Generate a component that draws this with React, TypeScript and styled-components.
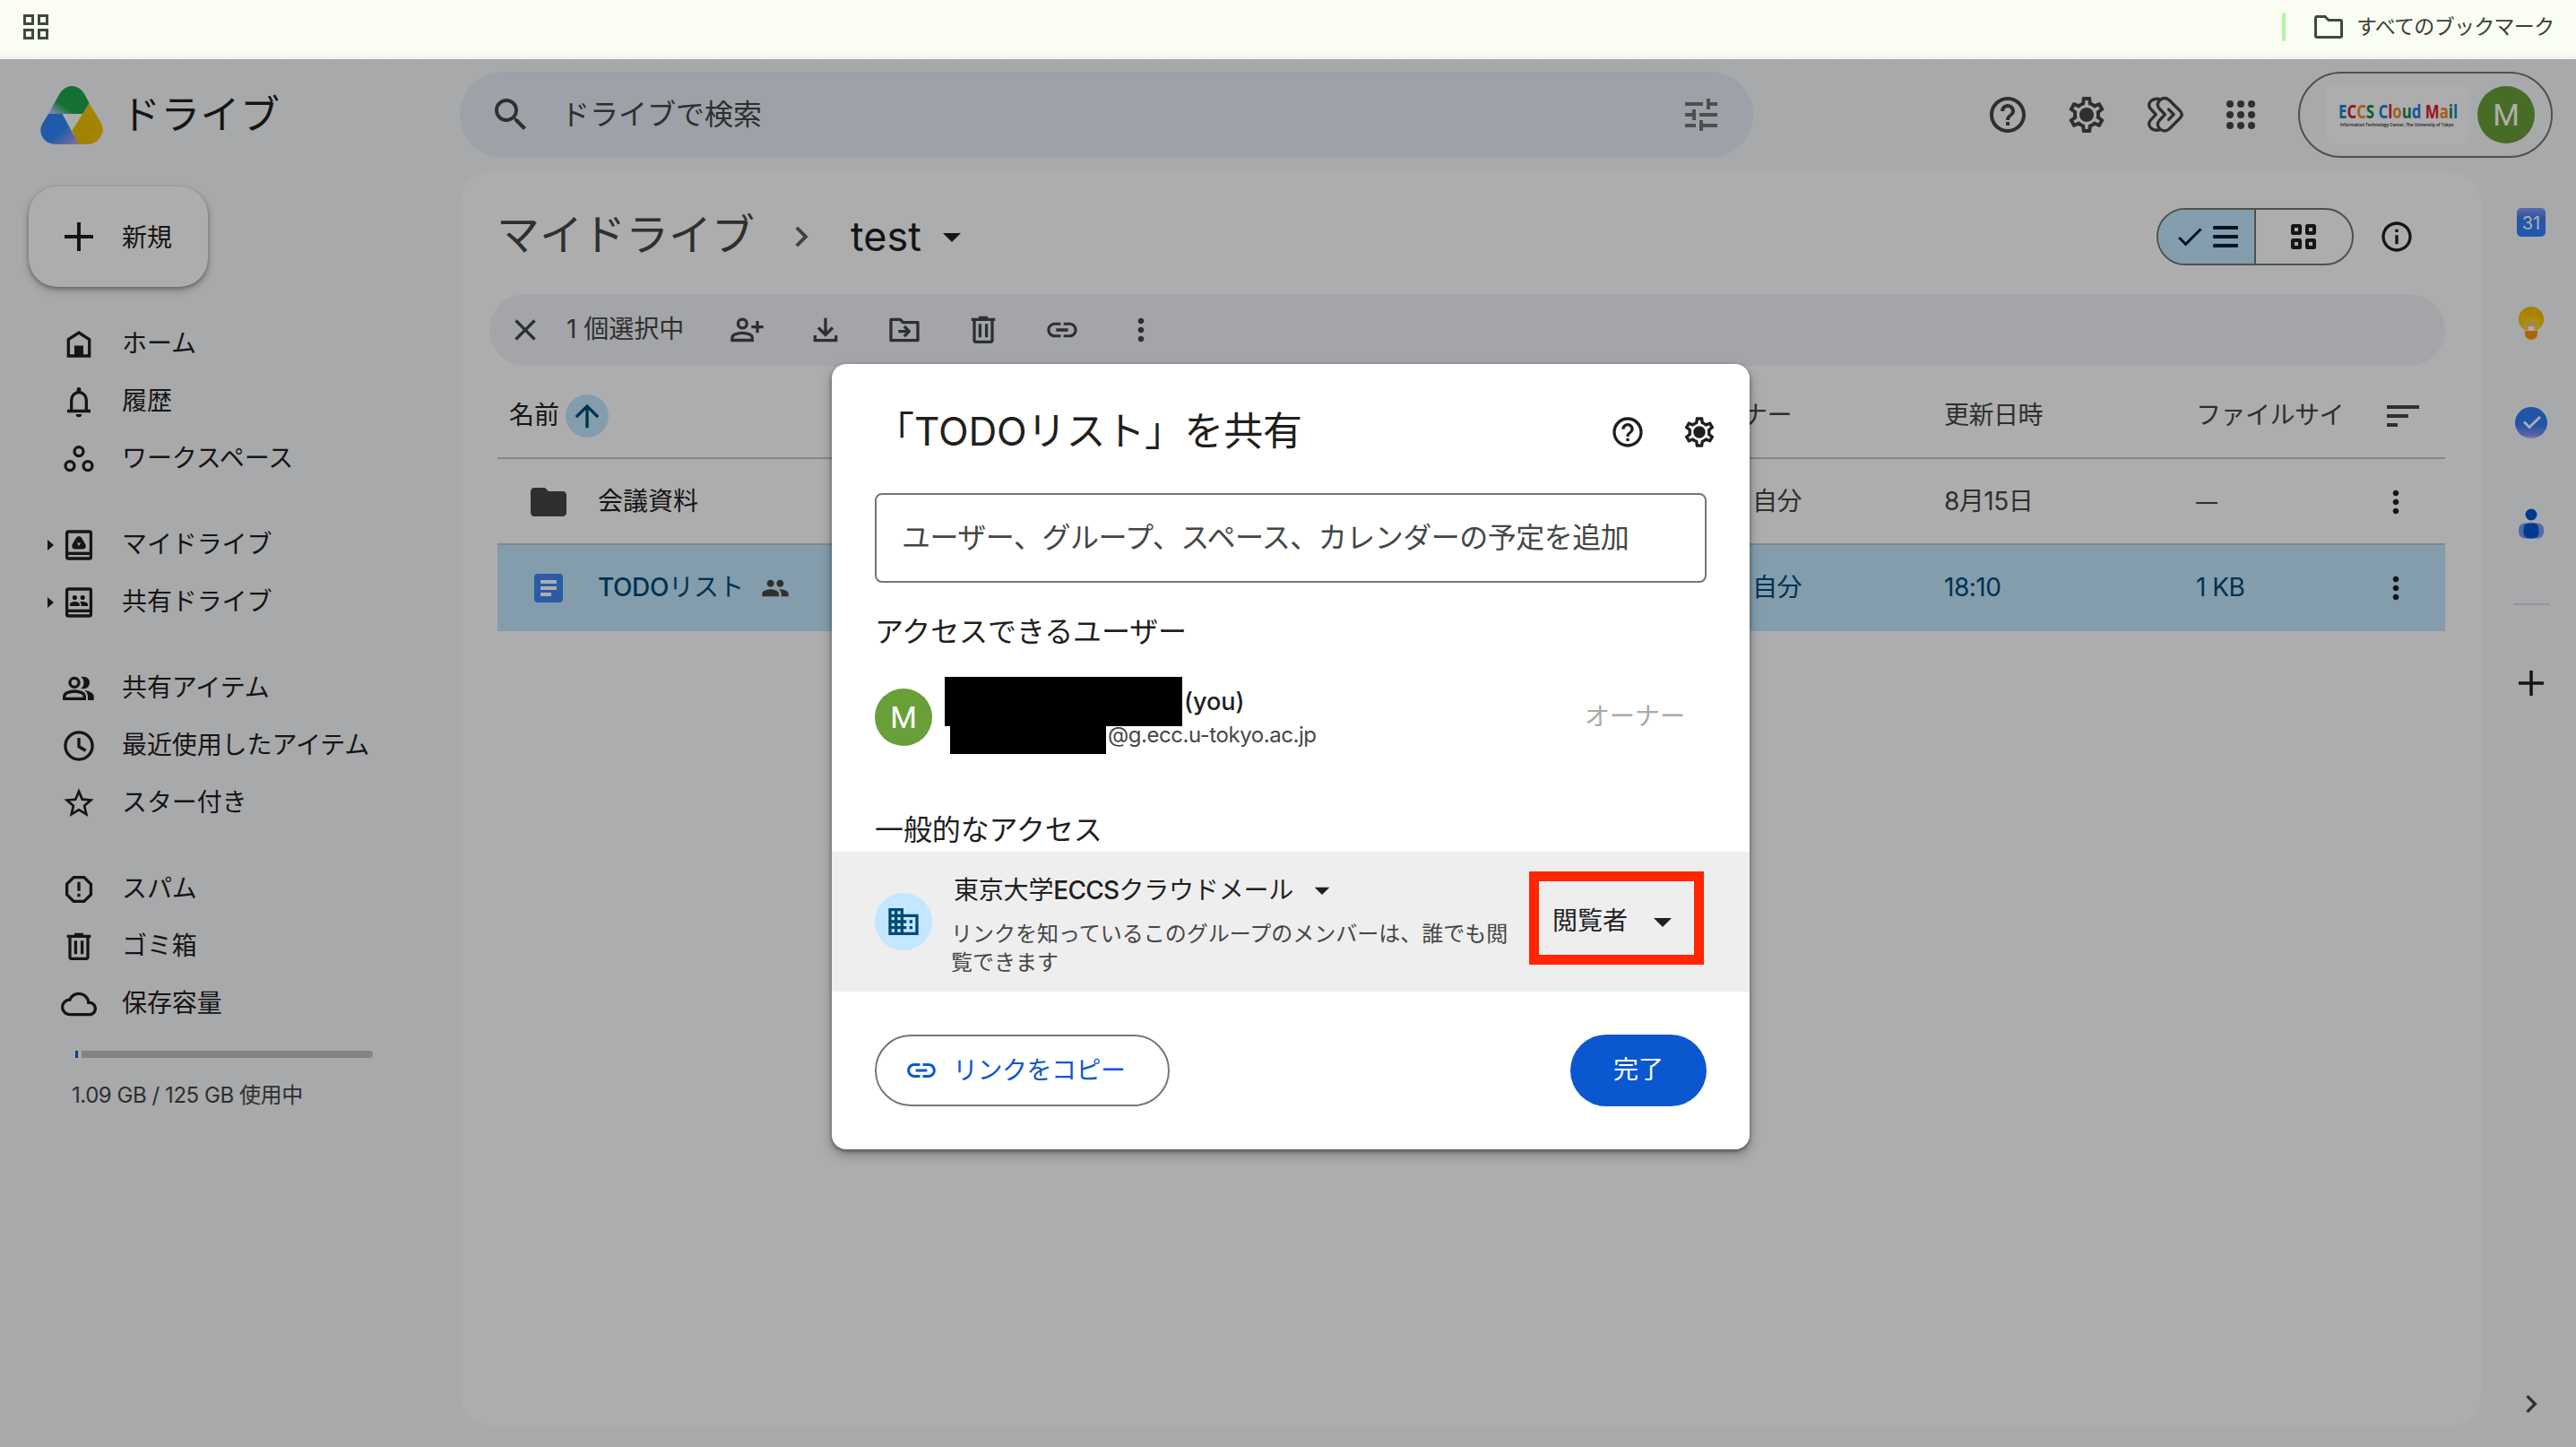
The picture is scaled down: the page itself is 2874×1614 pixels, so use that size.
import React from 'react';
import styled, { createGlobalStyle } from 'styled-components';
import {
  MdArrowDropDown, MdArrowUpward, MdBusiness, MdCheck, MdChevronRight, MdClose,
  MdCloudQueue, MdFolder, MdHelpOutline, MdInfoOutline, MdLink, MdMoreVert, MdOutlineSettings,
  MdPeople, MdSearch, MdSort, MdStarBorder, MdTune,
} from 'react-icons/md';

const Global = createGlobalStyle`
  * { box-sizing: border-box; }
  body { margin: 0; overflow: hidden; font-family: Inter, "Noto Sans CJK JP", sans-serif; }
  button { font: inherit; border: 0; background: none; padding: 0; margin: 0; }
  svg { display: block; flex: none; }
`;

/* ---------- icons ---------- */

type StrokeProps = { size?: number; box?: number; width?: number; children: React.ReactNode };
const Stroke = ({ size = 40, box = 40, width = 3.3, children }: StrokeProps) => (
  <svg width={size} height={size} viewBox={`0 0 ${box} ${box}`} fill="none" stroke="currentColor" strokeWidth={width}>
    {children}
  </svg>
);

const HomeIcon = () => (
  <Stroke>
    <path d="M8.3 33V14.6L20 7l11.7 7.6V33z" />
    <path d="M15 21.5h10V33H15z" fill="currentColor" stroke="none" />
  </Stroke>
);
const BellIcon = () => (
  <Stroke>
    <path d="M11.7 30.5V18a8.3 8.3 0 0 1 16.6 0v12.5M7 30.5h26" />
    <path d="M17.6 9V6.3a2.4 2.4 0 0 1 4.8 0V9zM16.7 34h6.6a3.3 3.3 0 0 1-6.6 0z" fill="currentColor" stroke="none" />
  </Stroke>
);
const WorkspacesIcon = () => (
  <Stroke>
    <circle cx="20" cy="11.6" r="5" /><circle cx="10" cy="27.6" r="5" /><circle cx="30" cy="27.6" r="5" />
  </Stroke>
);
const MyDriveIcon = () => (
  <Stroke>
    <rect x="6.6" y="5" width="26.8" height="30" rx="1.5" /><path d="M6 29.3h28" />
    <path fillRule="evenodd" fill="currentColor" stroke="none" d="M17.2 11.6q2.8-3.2 5.6 0l4.6 7.6q1.6 4.6-2.8 5.2h-9.2q-4.4-.6-2.8-5.2zM18 17.6l2 3.6 2-3.6z" />
  </Stroke>
);
const SharedDriveIcon = () => (
  <Stroke>
    <rect x="6.6" y="5" width="26.8" height="30" rx="1.5" /><path d="M6 29.3h28" />
    <g fill="currentColor" stroke="none">
      <circle cx="15.4" cy="14.6" r="2.6" /><circle cx="24.2" cy="14.6" r="2.6" />
      <path d="M10 24v-2.2q1-2.8 5.4-2.8t5.4 2.8V24zM22.4 24v-2.4l-1.2-2.4q7.4-1 8.8 2.6V24z" />
    </g>
  </Stroke>
);
const GroupIcon = () => (
  <Stroke>
    <circle cx="15" cy="13.4" r="5" />
    <path d="M3.7 31.3v-2.6q.3-2.6 3-3.9 8.3-3.6 16.6 0 2.7 1.3 3 3.9v2.6z" />
    <g fill="currentColor" stroke="none">
      <path d="M22 20.1q3.4-1.9 3.4-6.7T22 6.9q9.4-1.4 10 6.5-.6 8-10 6.700zM30 33V28.300q-.2-3.600-3.500-6.200 9.800 1.600 10.200 6.300V33z" />
    </g>
  </Stroke>
);
const PersonAddIcon = () => (
  <Stroke>
    <circle cx="15.3" cy="13" r="4.9" />
    <path d="M3.9 31.5v-2.9q.3-2.3 2.9-3.5 8.3-3.6 16.6 0 2.6 1.2 2.9 3.5v2.9z" />
    <path d="M32 10v13.3M25.3 16.7h13.3" />
  </Stroke>
);
const ClockIcon = () => <Stroke><circle cx="20" cy="20" r="15.1" /><path d="M20 11v9.8l7.6 4.4" /></Stroke>;
const SpamIcon = () => (
  <Stroke>
    <path d="M14.2 6.6h11.6l7.6 7.6v11.6l-7.6 7.6H14.2l-7.600-7.600V14.200zM20 11.700v10M20 24.800v3.400" />
  </Stroke>
);
const TrashIcon = () => (
  <Stroke>
    <path d="M10 8v23.5q0 1.8 1.800 1.800h16.400q1.800 0 1.800-1.800V8M6.700 8.300h26.600M15 6.300h10M16.400 13.300v15M23.600 13.300v15" />
  </Stroke>
);
const DownloadIcon = () => <Stroke><path d="M20 6.700V25M12 17.500l8 8 8-8M8.300 26v5.700h23.400V26" /></Stroke>;
const MoveIcon = () => (
  <Stroke>
    <path d="M5 31.700V8.300h10.300l3.300 3.400H35v20zM13.300 21.600h11M19.800 16l5.600 5.600-5.600 5.600" strokeLinejoin="round" />
  </Stroke>
);
const GearIcon = ({ size }: { size: number }) => (
  <svg width={size} height={size} viewBox="0 0 24 24" fill="currentColor">
    <MdOutlineSettings size={24} /><circle cx="12" cy="12" r="3.5" />
  </svg>
);
const ShortcutsIcon = () => (
  <Stroke size={48} box={48} width={3.3}>
    <g strokeLinejoin="round" strokeLinecap="round">
      <path d="M28 7.500L40.500 20q3.400 3.700 0 7.500L28 40q-5 4-10 0-4.800-4.600-1-9.500l6.500-6.800L17 17q-3.800-5 1-9.500 5-4 10 0z" />
      <path d="M17.500 6.800q-4.600-1.600-9 1.200-4.800 4-1.500 9l6.300 6.700L7 30.500q-3.300 5 1.500 9 4.400 2.800 9 1.200M27.500 18l5.700 5.700-5.700 5.700" />
    </g>
  </Stroke>
);
const AppsIcon = () => (
  <svg width="48" height="48" viewBox="0 0 48 48" fill="currentColor">
    {[12, 24, 36].flatMap((y) => [12, 24, 36].map((x) => <circle key={`${x}-${y}`} cx={x} cy={y} r="4" />))}
  </svg>
);
const FourSquares = ({ round }: { round?: boolean }) => (
  <svg width="28" height="28" viewBox="0 0 28 28" fill="none" stroke="currentColor" strokeWidth={round ? 4 : 3}>
    {[0, 16].flatMap((y) => [0, 16].map((x) => round
      ? <rect key={`${x}-${y}`} x={x + 2} y={y + 2} width="8" height="8" rx="0.5" />
      : <rect key={`${x}-${y}`} x={x + 1.5} y={y + 1.5} width="9" height="9" />))}
  </svg>
);
const ListIcon = () => (
  <svg width="28" height="24" viewBox="0 0 28 24" fill="currentColor">
    {[0, 10, 20].map((y) => <rect key={y} y={y} width="28" height="4" rx="1" />)}
  </svg>
);
const PlusIcon = ({ size, width }: { size: number; width: number }) => (
  <Stroke size={size} box={32} width={width}><path d="M16 0v32M0 16h32" /></Stroke>
);
const FolderOutline = () => (
  <svg width="32" height="26" viewBox="0 0 32 26" fill="none" stroke="currentColor" strokeWidth="3">
    <path d="M1.500 3q0-1.500 1.500-1.500h9l4 4h13q1.500 0 1.500 1.500v16q0 1.500-1.500 1.500H3q-1.500 0-1.500-1.500z" />
  </svg>
);
const DriveLogo = () => (
  <svg width="70" height="65" viewBox="0 0 70 65">
    <defs>
      <linearGradient id="dg" x1="0" y1="1" x2="0.7" y2="0.3">
        <stop offset="0.12" stopColor="#a9c8ff" /><stop offset="0.48" stopColor="#1ea64c" />
      </linearGradient>
      <linearGradient id="db" x1="0.4" y1="0.4" x2="1" y2="1">
        <stop offset="0.25" stopColor="#2f86fb" /><stop offset="0.9" stopColor="#b3a2f2" />
      </linearGradient>
      <linearGradient id="dy" x1="1" y1="0" x2="0" y2="1">
        <stop offset="0" stopColor="#f6c808" /><stop offset="1" stopColor="#eabc00" />
      </linearGradient>
    </defs>
    <path d="M25 31h23L35.3 50.5z" fill="#fff" />
    <path d="M9 31L21.500 8.500Q27 0 35.300 0T49 8.500L54.500 19 47.500 31z" fill="url(#dg)" />
    <path d="M54.500 19L67.500 40.500Q72.500 50 66.500 58 61.500 65 52.500 65H42.300L35.300 50z" fill="url(#dy)" />
    <path d="M9 31h15.500L42.800 65H17.500Q8 65 3 58-2 50 2 42.500z" fill="url(#db)" />
  </svg>
);
const DocIcon = () => (
  <svg width="32" height="32" viewBox="0 0 32 32">
    <rect width="32" height="32" rx="4" fill="#4285f4" />
    <path d="M7 9h18M7 16h18M7 23h12" stroke="#fff" strokeWidth="4" />
  </svg>
);
const CalendarIcon = () => (
  <svg width="32" height="32" viewBox="0 0 32 32">
    <defs><linearGradient id="cal" x1="0" y1="0" x2="0" y2="1"><stop offset="0" stopColor="#8f9bff" /><stop offset="0.35" stopColor="#3f7ff5" /><stop offset="1" stopColor="#3280ff" /></linearGradient></defs>
    <rect width="32" height="32" rx="5" fill="url(#cal)" />
    <text x="16" y="23.500" textAnchor="middle" fontSize="20" fill="#fff" fontFamily="Inter, sans-serif">31</text>
  </svg>
);
const KeepIcon = () => (
  <svg width="28" height="37" viewBox="0 0 28 37">
    <defs><radialGradient id="kp" cx="0.5" cy="0.85" r="0.6"><stop offset="0" stopColor="#ffb0c8" /><stop offset="0.5" stopColor="#fcd01a" /><stop offset="1" stopColor="#f8c000" /></radialGradient></defs>
    <path d="M14 0a14 14 0 0 1 7 26.200H7A14 14 0 0 1 14 0z" fill="url(#kp)" />
    <path d="M7 27h14v3a7 7 0 0 1-14 0z" fill="#ff9500" /><rect x="10.5" y="22" width="7" height="5" fill="#fff" />
  </svg>
);
const TasksIcon = () => (
  <svg width="36" height="36" viewBox="0 0 36 36">
    <defs><linearGradient id="tk" x1="0" y1="0" x2="0" y2="1"><stop offset="0.55" stopColor="#2f7cf6" /><stop offset="0.9" stopColor="#8b8df5" /><stop offset="1" stopColor="#b0d6ff" /></linearGradient></defs>
    <ellipse cx="18" cy="17.600" rx="18" ry="17.600" fill="url(#tk)" />
    <path d="M10 16.500l6 6L28 11" stroke="#fff" strokeWidth="3" fill="none" />
  </svg>
);
const ContactsIcon = () => (
  <svg width="28" height="34" viewBox="0 0 28 34">
    <circle cx="14" cy="7" r="6.5" fill="#0057d8" />
    <rect y="16.500" width="28" height="17" rx="7" fill="#7f9cf5" /><rect x="5.500" y="16.500" width="17" height="17" rx="6" fill="#0057d8" />
  </svg>
);

/* ---------- browser bar ---------- */

const Page = styled.div`
  width: 2874px; height: 1614px; display: grid; grid-template-rows: 66px 1548px; overflow: hidden;
`;
const BookmarkBar = styled.div`
  display: flex; align-items: center; height: 66px; padding: 0 0 6px 26px; color: #43483f;
  background: linear-gradient(#f9fdf2 0 58px, #f1f4eb 66px);
`;
const BarDivider = styled.i`width: 4px; height: 32px; margin: 0 32px 0 auto; border-radius: 2px; background: #b1f5a5;`;
const BookmarkLabel = styled.span`
  width: 245px; margin-left: 15px; font-size: 23px; letter-spacing: -0.7px; line-height: 32px; white-space: nowrap; color: #3a3f37;
`;

/* ---------- drive window ---------- */

const Stack = styled.div`display: grid; height: 1548px; > * { grid-area: 1 / 1; }`;
const Drive = styled.div`background: #f8fafd; color: #1f1f1f; height: 1548px; overflow: hidden;`;
const Header = styled.header`display: flex; align-items: center; height: 126px; padding-bottom: 2px; color: #444746;`;
const Brand = styled.div`display: flex; align-items: center; width: 513px; padding-left: 45px;`;
const BrandName = styled.span`
  margin-left: 20px; font-size: 44px; line-height: 60px; letter-spacing: 0.3px; color: #1f1f1f; white-space: nowrap;
`;
const SearchPill = styled.div`
  display: flex; align-items: center; width: 1443px; height: 96px; border-radius: 48px; padding: 0 34px 0 33px; background: #e9eef6;
`;
const SearchText = styled.span`flex: 1; margin-left: 32px; font-size: 32px; line-height: 44px;`;
const Dim = styled.span`color: #747775;`;
const HeaderIcons = styled.div`display: flex; align-items: center; gap: 40px; margin-left: 260px; > :last-child { margin-left: -4px; }`;
const Account = styled.div`
  display: flex; align-items: center; justify-content: flex-end; width: 284px; height: 96px; margin-left: 40px; padding-right: 18px;
  border: 2px solid #747775; border-radius: 48px;
`;
const OrgCard = styled.div`
  display: flex; flex-direction: column; justify-content: center; width: 158px; height: 66px; padding: 4px 0 0 13px; margin-right: 10px;
  border-radius: 6px; background: #fff; white-space: nowrap; color: #222;
`;
const OrgName = styled.b`
  font: 700 21px/22px "Open Sans", sans-serif; transform: scaleX(0.8); transform-origin: 0 50%;
`;
const Letter = styled.span<{ $c: string }>`color: ${(p) => p.$c};`;
const OrgSub = styled.span`
  padding-left: 4px; font: 600 10px/12px "Open Sans", sans-serif; transform: scale(0.47, 0.6); transform-origin: 0 0;
`;
const Avatar = styled.span`
  display: flex; align-items: center; justify-content: center; flex: none; width: 64px; height: 64px; border-radius: 50%;
  background: #689f38; color: #fff; font: 400 34px/64px Roboto, sans-serif;
`;

const Body = styled.div`display: flex; height: 1422px; > * { flex: none; }`;
const Sidebar = styled.nav`width: 514px; padding-top: 16px;`;
const NewButton = styled.button`
  display: flex; align-items: center; width: 200px; height: 112px; margin: 0 0 32px 32px; padding-left: 40px; border-radius: 32px;
  background: #fff; color: #1f1f1f; font-size: 28px; gap: 32px;
  box-shadow: 0 2px 4px rgba(0, 0, 0, 0.3), 0 4px 8px 2px rgba(0, 0, 0, 0.15);
  > span { margin-top: -3px; }
`;
const NavGroup = styled.div`margin-bottom: 32px;`;
const NavItem = styled.div`
  display: flex; align-items: center; height: 64px; padding-left: 53px; font-size: 28px; line-height: 40px; white-space: nowrap;
  > svg { width: 40px; }
`;
const Twisty = styled.i<{ $on?: boolean }>`
  width: 7px; margin-right: 8px; border: 6px solid transparent; border-right: 0;
  border-left: 7px solid ${(p) => (p.$on ? '#1f1f1f' : 'transparent')};
`;
const NavText = styled.span`margin-left: 28px; margin-top: -2px; letter-spacing: -0.1px;`;
const Quota = styled.div`
  display: flex; gap: 4px; width: 332px; height: 8px; margin: -12px 0 0 84px;
  &::before { content: ''; width: 3px; background: #0b57d0; }
  &::after { content: ''; flex: 1; background: #c0c2c4; border-radius: 0 4px 4px 0; }
`;
const QuotaText = styled.div`margin: 24px 0 0 80px; font-size: 24px; line-height: 36px; letter-spacing: -0.45px; color: #444746; white-space: nowrap;`;

const Panel = styled.main`width: 2254px; height: 1398px; border-radius: 32px; background: #fff; padding: 0 40px 0 32px;`;
const Crumbs = styled.div`display: flex; align-items: center; height: 136px; padding: 8px 69px 0 8px;`;
const CrumbParent = styled.span`width: 317px; font-size: 48px; line-height: 64px; color: #444746; margin-top: -4px; white-space: nowrap;`;
const CrumbArrow = styled.span`color: #5f6261; margin-right: 32px;`;
const CrumbName = styled.span`font-size: 45px; line-height: 64px; margin-right: 5px; width: 84px;`;
const ViewToggle = styled.div`
  display: flex; width: 220px; height: 64px; margin-left: auto; border: 2px solid #747775; border-radius: 32px; overflow: hidden;
`;
const ToggleHalf = styled.span<{ $on?: boolean }>`
  display: flex; align-items: center; justify-content: center; gap: 8px; flex: 1; color: ${(p) => (p.$on ? '#001d35' : '#1f1f1f')};
  padding-right: 2px;
  background: ${(p) => (p.$on ? '#c2e7ff' : 'transparent')}; border-right: ${(p) => (p.$on ? '2px solid #747775' : '0')};
`;
const InfoSlot = styled.span`margin-left: 28px; margin-right: -35px;`;
const Selection = styled.div`
  display: flex; align-items: center; width: 2182px; height: 80px; padding-left: 20px; border-radius: 40px; background: #f0f4f9; color: #444746;
`;
const SelectionCount = styled.span`width: 181px; margin: -2px 0 0 26px; font-size: 28px; line-height: 40px; white-space: nowrap;`;
const SelectionTools = styled.div`display: flex; gap: 48px;`;

const Table = styled.div`width: 2173px; margin-left: 9px;`;
const cols = '1334px 280px 281px 211px 1fr';
const TableRow = styled.div<{ $kind?: 'head' | 'selected' }>`
  display: grid; grid-template-columns: ${cols}; align-items: center; white-space: nowrap;
  height: ${(p) => (p.$kind === 'head' ? 104 : 96)}px; font-size: 28px; line-height: 40px;
  padding-top: ${(p) => (p.$kind === 'head' ? 10 : 2)}px;
  border-bottom: 2px solid ${(p) => (p.$kind === 'selected' ? '#c2e7ff' : '#c4c7c5')};
  background: ${(p) => (p.$kind === 'selected' ? '#c2e7ff' : 'transparent')};
  color: ${(p) => (p.$kind === 'selected' ? '#004a77' : '#444746')};
`;
const Cell = styled.span<{ $pad?: number }>`
  padding-left: ${(p) => p.$pad ?? 0}px; margin-top: -2px; overflow: hidden; letter-spacing: -0.5px;
`;
const Dash = styled.span`font-size: 24px; letter-spacing: 0;`;
const HeadName = styled.span`display: flex; align-items: center; gap: 7px; padding-left: 13px; color: #1f1f1f; > b { font-weight: 400; margin-top: -2px; }`;
const SortBadge = styled.span`
  display: flex; align-items: center; justify-content: center; width: 48px; height: 48px; border-radius: 50%; background: #c2e7ff; color: #004a77;
`;
const FileName = styled.span`display: flex; align-items: center;`;
const FileIcon = styled.span`display: flex; justify-content: center; width: 112px; padding-left: 1px; color: #444746;`;
const FileLabel = styled.span<{ $strong?: boolean }>`
  margin: -2px 19px 0 0; color: ${(p) => (p.$strong ? 'inherit' : '#1f1f1f')};
  > b { font-weight: 500; letter-spacing: -0.4px; }
`;
const Dark = styled.span`display: flex; color: #1f1f1f; margin-left: -8px;`;
const HeadMenu = styled.span`display: flex; color: #444746; margin-left: -4px;`;

const Rail = styled.aside`display: flex; flex-direction: column; align-items: center; width: 106px; height: 1422px; padding-left: 6px;`;
const RailItem = styled.span`display: flex; align-items: center; justify-content: center; height: 112px; color: #1f1f1f;`;
const RailLine = styled.i`width: 40px; height: 2px; margin: 33px 0 31px; background: #dadce0;`;
const RailEnd = styled.span`margin-top: auto; margin-bottom: 28px; color: #444746;`;

/* ---------- share dialog ---------- */

const Scrim = styled.div`z-index: 1; background: rgba(0, 0, 0, 0.32); padding: 340px 0 0 928px;`;
const Dialog = styled.section`
  width: 1024px; height: 876px; border-radius: 16px; background: #fff; color: #1f1f1f; overflow: hidden;
  box-shadow: 0 2px 4px rgba(0, 0, 0, 0.45), 0 6px 12px 2px rgba(0, 0, 0, 0.2);
`;
const DialogHead = styled.div`display: flex; align-items: center; height: 144px; padding: 8px 36px 0 48px; gap: 40px;`;
const DialogTitle = styled.h1`flex: 1; margin: -3px 0 0; font-size: 44px; line-height: 60px; font-weight: 400; letter-spacing: -0.1px; white-space: nowrap;`;
const PeopleInput = styled.div`
  width: 928px; height: 100px; margin-left: 48px; padding-left: 28px; border: 2px solid #747775; border-radius: 8px;
  font-size: 32px; line-height: 95px; letter-spacing: -0.5px; color: #444746; white-space: nowrap;
`;
const SectionTitle = styled.h2<{ $top: number }>`
  margin: ${(p) => p.$top}px 0 0 48px; font-size: 32px; line-height: 48px; font-weight: 400; letter-spacing: -0.1px;
`;
const Person = styled.div`display: flex; align-items: flex-start; height: 90px; margin-top: 26px; padding: 0 72px 0 48px;`;
const PersonAvatar = styled.div`margin: 13px 14px 0 0;`;
const PersonText = styled.div`flex: 1;`;
const NameLine = styled.div`display: flex; align-items: center; gap: 2px; font-size: 27px; line-height: 40px; font-weight: 500;`;
const MailLine = styled.div`display: flex; gap: 2px; margin-left: 6px; font-size: 24px; line-height: 20px; letter-spacing: -0.45px; color: #444746;`;
const Redacted = styled.i<{ $w: number; $h: number }>`width: ${(p) => p.$w}px; height: ${(p) => p.$h}px; background: #000;`;
const OwnerTag = styled.span`margin-top: 24px; font-size: 28px; line-height: 40px; color: #a8a9a8;`;
const Access = styled.div`
  display: flex; height: 156px; margin-top: 0; padding: 22px 0 0 48px; background: #eee;
`;
const GroupBadge = styled.span`
  display: flex; align-items: center; justify-content: center; width: 64px; height: 64px; margin: 24px 21px 0 0; border-radius: 50%;
  background: #c2e7ff; color: #004a77;
`;
const AccessText = styled.div`width: 645px;`;
const GroupName = styled.div`
  display: flex; align-items: center; height: 41px; padding-left: 3px; font-size: 28px; line-height: 40px; letter-spacing: -0.2px; white-space: nowrap;
  > b { font-weight: 500; letter-spacing: -0.7px; } > svg { margin-left: 12px; }
`;
const AccessNote = styled.p`margin: 13px 0 0; font-size: 24px; line-height: 32px; letter-spacing: 0; color: #444746; white-space: nowrap;`;
const RoleButton = styled.button`
  display: flex; align-items: center; justify-content: space-between; width: 195px; height: 104px; padding: 8px 11px 0 15px;
  border: 11px solid #ff2600; color: #1f1f1f; font-size: 28px; line-height: 40px;
  > span { margin-top: -2px; }
`;
const DialogFoot = styled.div`display: flex; justify-content: space-between; padding: 48px 48px 0;`;
const CopyButton = styled.button`
  display: flex; align-items: center; width: 329px; height: 80px; padding-left: 31px; gap: 16px; border: 2px solid #747775; border-radius: 40px;
  color: #0b57d0; font-size: 28px; line-height: 40px; letter-spacing: -0.5px;
`;
const DoneButton = styled.button`
  width: 152px; height: 80px; border-radius: 40px; background: #0b57d0; color: #fff; font-size: 28px; line-height: 76px; padding-bottom: 2px;
`;

const orgLetters: [string, string][] = [
  ['E', '#1a7fe0'], ['C', '#e0202c'], ['C', '#f0902c'], ['S', '#0f8a4c'], [' ', '#000'],
  ['C', '#1a7fe0'], ['l', '#e0202c'], ['o', '#f0902c'], ['u', '#0f8a4c'], ['d', '#1a7fe0'], [' ', '#000'],
  ['M', '#e0202c'], ['a', '#f0902c'], ['i', '#0f8a4c'], ['l', '#1a7fe0'],
];

const nav: { label: string; icon: React.ReactNode; twisty?: boolean }[][] = [
  [
    { label: 'ホーム', icon: <HomeIcon /> },
    { label: '履歴', icon: <BellIcon /> },
    { label: 'ワークスペース', icon: <WorkspacesIcon /> },
  ],
  [
    { label: 'マイドライブ', icon: <MyDriveIcon />, twisty: true },
    { label: '共有ドライブ', icon: <SharedDriveIcon />, twisty: true },
  ],
  [
    { label: '共有アイテム', icon: <GroupIcon /> },
    { label: '最近使用したアイテム', icon: <ClockIcon /> },
    { label: 'スター付き', icon: <MdStarBorder size={40} /> },
  ],
  [
    { label: 'スパム', icon: <SpamIcon /> },
    { label: 'ゴミ箱', icon: <TrashIcon /> },
    { label: '保存容量', icon: <MdCloudQueue size={40} /> },
  ],
];

const ShareDialog = () => (
  <Dialog>
    <DialogHead>
      <DialogTitle>「TODOリスト」を共有</DialogTitle>
      <MdHelpOutline size={40} />
      <GearIcon size={40} />
    </DialogHead>
    <PeopleInput>ユーザー、グループ、スペース、カレンダーの予定を追加</PeopleInput>
    <SectionTitle $top={31}>アクセスできるユーザー</SectionTitle>
    <Person>
      <PersonAvatar><Avatar>M</Avatar></PersonAvatar>
      <PersonText>
        <NameLine><Redacted $w={265} $h={55} />(you)</NameLine>
        <MailLine><Redacted $w={174} $h={31} />@g.ecc.u-tokyo.ac.jp</MailLine>
      </PersonText>
      <OwnerTag>オーナー</OwnerTag>
    </Person>
    <SectionTitle $top={57}>一般的なアクセス</SectionTitle>
    <Access>
      <GroupBadge><MdBusiness size={40} /></GroupBadge>
      <AccessText>
        <GroupName>東京大学<b>ECCS</b>クラウドメール<MdArrowDropDown size={40} /></GroupName>
        <AccessNote>リンクを知っているこのグループのメンバーは、誰でも閲<br />覧できます</AccessNote>
      </AccessText>
      <RoleButton><span>閲覧者</span><MdArrowDropDown size={48} /></RoleButton>
    </Access>
    <DialogFoot>
      <CopyButton><MdLink size={38} /><span>リンクをコピー</span></CopyButton>
      <DoneButton>完了</DoneButton>
    </DialogFoot>
  </Dialog>
);

export default function App() {
  return (
    <Page>
      <Global />
      <BookmarkBar>
        <FourSquares />
        <BarDivider />
        <FolderOutline />
        <BookmarkLabel>すべてのブックマーク</BookmarkLabel>
      </BookmarkBar>
      <Stack>
        <Drive>
          <Header>
            <Brand><DriveLogo /><BrandName>ドライブ</BrandName></Brand>
            <SearchPill>
              <MdSearch size={48} />
              <SearchText>ドライブで検索</SearchText>
              <Dim><MdTune size={48} /></Dim>
            </SearchPill>
            <HeaderIcons>
              <MdHelpOutline size={48} /><GearIcon size={48} /><ShortcutsIcon /><AppsIcon />
            </HeaderIcons>
            <Account>
              <OrgCard>
                <OrgName>{orgLetters.map(([ch, c], i) => <Letter key={i} $c={c}>{ch}</Letter>)}</OrgName>
                <OrgSub>Information Technology Center, The University of Tokyo</OrgSub>
              </OrgCard>
              <Avatar>M</Avatar>
            </Account>
          </Header>
          <Body>
            <Sidebar>
              <NewButton><PlusIcon size={32} width={4} /><span>新規</span></NewButton>
              {nav.map((group, i) => (
                <NavGroup key={i}>
                  {group.map((item) => (
                    <NavItem key={item.label}>
                      <Twisty $on={item.twisty} />{item.icon}<NavText>{item.label}</NavText>
                    </NavItem>
                  ))}
                </NavGroup>
              ))}
              <Quota />
              <QuotaText>1.09 GB / 125 GB 使用中</QuotaText>
            </Sidebar>
            <Panel>
              <Crumbs>
                <CrumbParent>マイドライブ</CrumbParent>
                <CrumbArrow><MdChevronRight size={46} /></CrumbArrow>
                <CrumbName>test</CrumbName>
                <MdArrowDropDown size={48} />
                <ViewToggle>
                  <ToggleHalf $on><MdCheck size={36} /><ListIcon /></ToggleHalf>
                  <ToggleHalf><FourSquares round /></ToggleHalf>
                </ViewToggle>
                <InfoSlot><MdInfoOutline size={40} /></InfoSlot>
              </Crumbs>
              <Selection>
                <MdClose size={40} />
                <SelectionCount>1 個選択中</SelectionCount>
                <SelectionTools>
                  <PersonAddIcon /><DownloadIcon /><MoveIcon /><TrashIcon /><MdLink size={40} /><MdMoreVert size={40} />
                </SelectionTools>
              </Selection>
              <Table>
                <TableRow $kind="head">
                  <HeadName><b>名前</b><SortBadge><MdArrowUpward size={40} /></SortBadge></HeadName>
                  <Cell>オーナー</Cell>
                  <Cell>更新日時</Cell>
                  <Cell>ファイルサイ</Cell>
                  <HeadMenu><MdSort size={48} /></HeadMenu>
                </TableRow>
                <TableRow>
                  <FileName><FileIcon><MdFolder size={48} /></FileIcon><FileLabel>会議資料</FileLabel></FileName>
                  <Cell $pad={66}>自分</Cell>
                  <Cell>8月15日</Cell>
                  <Cell><Dash>—</Dash></Cell>
                  <Dark><MdMoreVert size={40} /></Dark>
                </TableRow>
                <TableRow $kind="selected">
                  <FileName>
                    <FileIcon><DocIcon /></FileIcon><FileLabel $strong><b>TODO</b>リスト</FileLabel>
                    <MdPeople size={32} color="#444746" />
                  </FileName>
                  <Cell $pad={66}>自分</Cell>
                  <Cell>18:10</Cell>
                  <Cell>1 KB</Cell>
                  <Dark><MdMoreVert size={40} /></Dark>
                </TableRow>
              </Table>
            </Panel>
            <Rail>
              <RailItem><CalendarIcon /></RailItem>
              <RailItem><KeepIcon /></RailItem>
              <RailItem><TasksIcon /></RailItem>
              <RailItem><ContactsIcon /></RailItem>
              <RailLine />
              <RailItem><PlusIcon size={28} width={4} /></RailItem>
              <RailEnd><MdChevronRight size={40} /></RailEnd>
            </Rail>
          </Body>
        </Drive>
        <Scrim><ShareDialog /></Scrim>
      </Stack>
    </Page>
  );
}
